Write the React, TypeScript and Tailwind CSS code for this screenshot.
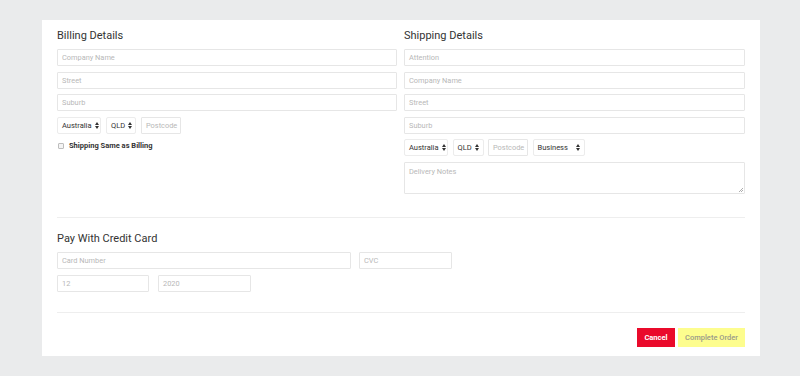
import React from "react";

const font = { fontFamily: "Roboto, 'Noto Sans', sans-serif" };

function Arrows() {
  return (
    <svg width="4" height="7" viewBox="0 0 4 7" className="ml-[3px] shrink-0">
      <path d="M0 3 L2 0 L4 3 Z" fill="#333" />
      <path d="M0 4 L2 7 L4 4 Z" fill="#333" />
    </svg>
  );
}

function Input({ ph, className = "" }: { ph: string; className?: string }) {
  return (
    <div
      className={`h-[17px] border border-[#e6e6e6] rounded-[1px] flex items-center px-[4px] text-[7.4px] text-[#b8b8b8] ${className}`}
    >
      {ph}
    </div>
  );
}

function Select({ label, w }: { label: string; w: string }) {
  return (
    <div
      className={`h-[17px] ${w} border border-[#ececec] rounded-[2px] flex items-center justify-between px-[4px] text-[7.5px] text-[#333]`}
    >
      <span>{label}</span>
      <Arrows />
    </div>
  );
}

function Heading({ children }: { children: React.ReactNode }) {
  return (
    <div className="text-[11px] leading-[16px] text-[#333] mb-[5px]">{children}</div>
  );
}

export default function App() {
  return (
    <div style={font} className="w-[800px] h-[376px] bg-[#eaebec] pt-[20px] pl-[42px]">
      <div className="w-[718px] h-[336px] bg-white px-[15px] pt-[8px] flex flex-col">
        <div className="grid grid-cols-[340px_341px] gap-x-[7px]">
          <div className="flex flex-col">
            <Heading>Billing Details</Heading>
            <div className="flex flex-col gap-[5.6px]">
              <Input ph="Company Name" />
              <Input ph="Street" />
              <Input ph="Suburb" />
              <div className="flex gap-[5px]">
                <Select label="Australia" w="w-[44px]" />
                <Select label="QLD" w="w-[30px]" />
                <Input ph="Postcode" className="w-[40px]" />
              </div>
              <div className="flex items-center gap-[5px] pl-[1px] mt-[1px]">
                <div className="w-[6px] h-[6px] border border-[#bdbdbd] rounded-[1px] bg-[#f4f4f4]" />
                <span className="text-[7.5px] font-bold text-[#333]">Shipping Same as Billing</span>
              </div>
            </div>
          </div>
          <div className="flex flex-col">
            <Heading>Shipping Details</Heading>
            <div className="flex flex-col gap-[5.6px]">
              <Input ph="Attention" />
              <Input ph="Company Name" />
              <Input ph="Street" />
              <Input ph="Suburb" />
              <div className="flex gap-[4.5px]">
                <Select label="Australia" w="w-[44px]" />
                <Select label="QLD" w="w-[31px]" />
                <Input ph="Postcode" className="w-[40px]" />
                <Select label="Business" w="w-[52px]" />
              </div>
              <div className="relative h-[32px] border border-[#e6e6e6] rounded-[1px] px-[4px] pt-[3px] text-[7.4px] text-[#b8b8b8]">
                Delivery Notes
                <svg width="4" height="4" viewBox="0 0 4 4" className="absolute right-[1px] bottom-[1px]">
                  <path d="M4 0 L0 4 M4 2 L2 4" stroke="#999" strokeWidth="0.8" />
                </svg>
              </div>
            </div>
          </div>
        </div>

        <div className="mt-[23px] h-px bg-[#eeeeee]" />

        <div className="mt-[13px]">
          <Heading>Pay With Credit Card</Heading>
          <div className="flex flex-col gap-[6px]">
            <div className="flex gap-[8px]">
              <Input ph="Card Number" className="w-[294px]" />
              <Input ph="CVC" className="w-[93px]" />
            </div>
            <div className="flex gap-[9px]">
              <Input ph="12" className="w-[92px]" />
              <Input ph="2020" className="w-[93px]" />
            </div>
          </div>
        </div>

        <div className="mt-[20px] h-px bg-[#eeeeee]" />

        <div className="mt-[15px] flex justify-end gap-[3px]">
          <div className="w-[38px] h-[19px] bg-[#ea0a2b] text-white text-[7.5px] font-bold flex items-center justify-center">
            Cancel
          </div>
          <div className="w-[67px] h-[19px] bg-[#fdfd8e] text-[#9a9a8a] text-[7.5px] font-medium flex items-center justify-center">
            Complete Order
          </div>
        </div>
      </div>
    </div>
  );
}
